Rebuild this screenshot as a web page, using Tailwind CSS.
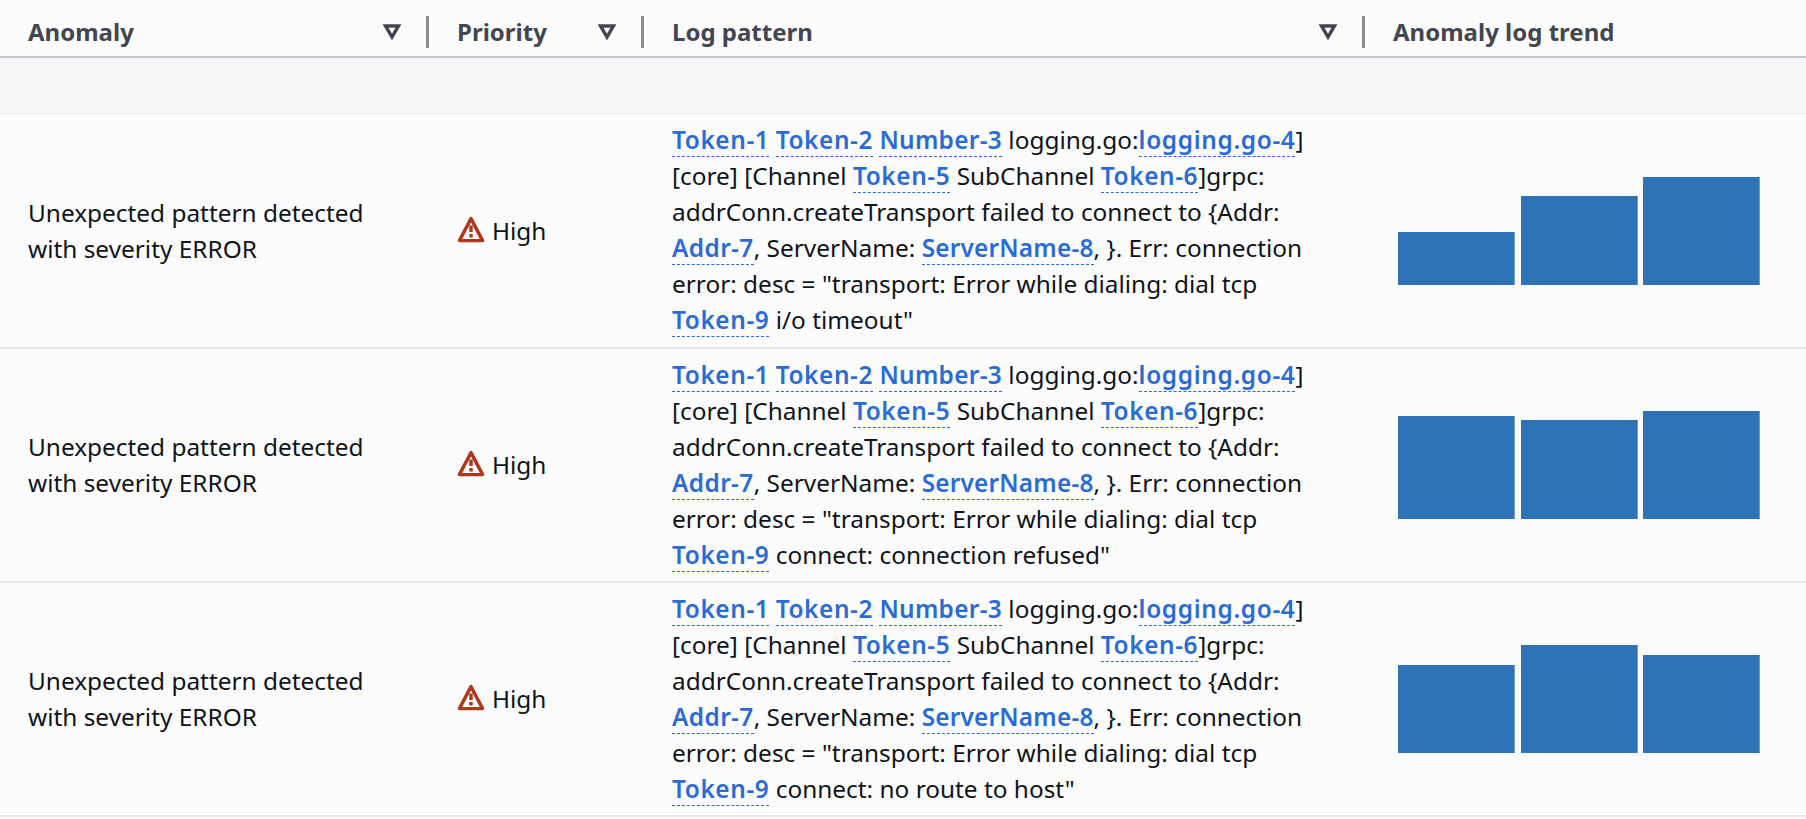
<!doctype html>
<html>
<head>
<meta charset="utf-8">
<script src="https://cdn.jsdelivr.net/npm/@tailwindcss/browser@4"></script>
</head>
<body class="bg-[#fcfcfc] overflow-hidden">
<div class="w-[1806px] h-[819px] bg-[#fcfcfc] font-['Noto_Sans',sans-serif] text-[24.4px] leading-[36px] text-[#0f141a]">
  <div class="grid grid-cols-[429px_215px_721px_1fr] h-[58px] pt-[8px] border-b-2 border-[#c6c6cd] text-[#424650] text-[24px] font-bold">
    <div class="flex items-center pl-[28px]">
      <span class="flex-1">Anomaly</span>
      <svg class="w-[18px] h-[16px] mr-[25px]" viewBox="0 0 18 16" fill="none" stroke="#424650" stroke-width="3.4"><path d="M2.6 2h12.8L9 13z"/></svg>
      <span class="w-[3px] h-[32px] bg-[#8c8c94]"></span>
    </div>
    <div class="flex items-center pl-[28px]">
      <span class="flex-1">Priority</span>
      <svg class="w-[18px] h-[16px] mr-[25px]" viewBox="0 0 18 16" fill="none" stroke="#424650" stroke-width="3.4"><path d="M2.6 2h12.8L9 13z"/></svg>
      <span class="w-[3px] h-[32px] bg-[#8c8c94]"></span>
    </div>
    <div class="flex items-center pl-[28px]">
      <span class="flex-1">Log pattern</span>
      <svg class="w-[18px] h-[16px] mr-[25px]" viewBox="0 0 18 16" fill="none" stroke="#424650" stroke-width="3.4"><path d="M2.6 2h12.8L9 13z"/></svg>
      <span class="w-[3px] h-[32px] bg-[#8c8c94]"></span>
    </div>
    <div class="flex items-center pl-[28px]">Anomaly log trend</div>
  </div>
  <div class="h-[56px] bg-[#f6f6f9] border-b border-[#e9ebed]"></div>

  <div class="grid grid-cols-[429px_215px_721px_1fr] h-[235px] border-b-2 border-[#e9ebed]">
    <div class="flex items-center pl-[28px] whitespace-nowrap"><span>Unexpected pattern detected<br>with severity ERROR</span></div>
    <div class="flex items-center pl-[28px] gap-[7px]">
      <svg class="w-[28px] h-[28px] mb-[2px]" viewBox="0 0 28 28" fill="none" stroke="#b0371a" stroke-width="3.4" stroke-linejoin="round"><path d="M14 2.6 2.4 24.6h23.2z"/><path d="M14 9.5v6.5M14 18v3.4"/></svg>
      <span>High</span>
    </div>
    <div class="pl-[28px] pt-[8px] whitespace-nowrap">
      <a class="tracking-[0.6px] text-[#2a6bd6] font-semibold border-b border-dashed border-[#2a6bd6]">Token-1</a> <a class="tracking-[0.6px] text-[#2a6bd6] font-semibold border-b border-dashed border-[#2a6bd6]">Token-2</a> <a class="tracking-[0.3px] text-[#2a6bd6] font-semibold border-b border-dashed border-[#2a6bd6]">Number-3</a> logging.go:<a class="tracking-[0.65px] text-[#2a6bd6] font-semibold border-b border-dashed border-[#2a6bd6]">logging.go-4</a>]<br>
      [core] [Channel <a class="tracking-[0.6px] text-[#2a6bd6] font-semibold border-b border-dashed border-[#2a6bd6]">Token-5</a> SubChannel <a class="tracking-[0.6px] text-[#2a6bd6] font-semibold border-b border-dashed border-[#2a6bd6]">Token-6</a>]grpc:<br>
      addrConn.createTransport failed to connect to {Addr:<br>
      <a class="tracking-[0.4px] text-[#2a6bd6] font-semibold border-b border-dashed border-[#2a6bd6]">Addr-7</a>, ServerName: <a class="tracking-[0.2px] text-[#2a6bd6] font-semibold border-b border-dashed border-[#2a6bd6]">ServerName-8</a>, }. Err: connection<br>
      error: desc = "transport: Error while dialing: dial tcp<br>
      <a class="tracking-[0.6px] text-[#2a6bd6] font-semibold border-b border-dashed border-[#2a6bd6]">Token-9</a> i/o timeout"
    </div>
    <div class="flex items-center pl-[33px]">
      <div class="flex items-end gap-[5.5px] h-[108px]">
        <div class="w-[117px] h-[53px] bg-[#2e73b8] border-r border-[#6f9fd0]"></div>
        <div class="w-[117px] h-[89px] bg-[#2e73b8] border-r border-[#6f9fd0]"></div>
        <div class="w-[117px] h-[108px] bg-[#2e73b8] border-r border-[#6f9fd0]"></div>
      </div>
    </div>
  </div>

  <div class="grid grid-cols-[429px_215px_721px_1fr] h-[234px] border-b-2 border-[#e9ebed]">
    <div class="flex items-center pl-[28px] whitespace-nowrap"><span>Unexpected pattern detected<br>with severity ERROR</span></div>
    <div class="flex items-center pl-[28px] gap-[7px]">
      <svg class="w-[28px] h-[28px] mb-[2px]" viewBox="0 0 28 28" fill="none" stroke="#b0371a" stroke-width="3.4" stroke-linejoin="round"><path d="M14 2.6 2.4 24.6h23.2z"/><path d="M14 9.5v6.5M14 18v3.4"/></svg>
      <span>High</span>
    </div>
    <div class="pl-[28px] pt-[8px] whitespace-nowrap">
      <a class="tracking-[0.6px] text-[#2a6bd6] font-semibold border-b border-dashed border-[#2a6bd6]">Token-1</a> <a class="tracking-[0.6px] text-[#2a6bd6] font-semibold border-b border-dashed border-[#2a6bd6]">Token-2</a> <a class="tracking-[0.3px] text-[#2a6bd6] font-semibold border-b border-dashed border-[#2a6bd6]">Number-3</a> logging.go:<a class="tracking-[0.65px] text-[#2a6bd6] font-semibold border-b border-dashed border-[#2a6bd6]">logging.go-4</a>]<br>
      [core] [Channel <a class="tracking-[0.6px] text-[#2a6bd6] font-semibold border-b border-dashed border-[#2a6bd6]">Token-5</a> SubChannel <a class="tracking-[0.6px] text-[#2a6bd6] font-semibold border-b border-dashed border-[#2a6bd6]">Token-6</a>]grpc:<br>
      addrConn.createTransport failed to connect to {Addr:<br>
      <a class="tracking-[0.4px] text-[#2a6bd6] font-semibold border-b border-dashed border-[#2a6bd6]">Addr-7</a>, ServerName: <a class="tracking-[0.2px] text-[#2a6bd6] font-semibold border-b border-dashed border-[#2a6bd6]">ServerName-8</a>, }. Err: connection<br>
      error: desc = "transport: Error while dialing: dial tcp<br>
      <a class="tracking-[0.6px] text-[#2a6bd6] font-semibold border-b border-dashed border-[#2a6bd6]">Token-9</a> connect: connection refused"
    </div>
    <div class="flex items-center pl-[33px]">
      <div class="flex items-end gap-[5.5px] h-[108px]">
        <div class="w-[117px] h-[103px] bg-[#2e73b8] border-r border-[#6f9fd0]"></div>
        <div class="w-[117px] h-[99px] bg-[#2e73b8] border-r border-[#6f9fd0]"></div>
        <div class="w-[117px] h-[108px] bg-[#2e73b8] border-r border-[#6f9fd0]"></div>
      </div>
    </div>
  </div>

  <div class="grid grid-cols-[429px_215px_721px_1fr] h-[234px] border-b-2 border-[#e9ebed]">
    <div class="flex items-center pl-[28px] whitespace-nowrap"><span>Unexpected pattern detected<br>with severity ERROR</span></div>
    <div class="flex items-center pl-[28px] gap-[7px]">
      <svg class="w-[28px] h-[28px] mb-[2px]" viewBox="0 0 28 28" fill="none" stroke="#b0371a" stroke-width="3.4" stroke-linejoin="round"><path d="M14 2.6 2.4 24.6h23.2z"/><path d="M14 9.5v6.5M14 18v3.4"/></svg>
      <span>High</span>
    </div>
    <div class="pl-[28px] pt-[8px] whitespace-nowrap">
      <a class="tracking-[0.6px] text-[#2a6bd6] font-semibold border-b border-dashed border-[#2a6bd6]">Token-1</a> <a class="tracking-[0.6px] text-[#2a6bd6] font-semibold border-b border-dashed border-[#2a6bd6]">Token-2</a> <a class="tracking-[0.3px] text-[#2a6bd6] font-semibold border-b border-dashed border-[#2a6bd6]">Number-3</a> logging.go:<a class="tracking-[0.65px] text-[#2a6bd6] font-semibold border-b border-dashed border-[#2a6bd6]">logging.go-4</a>]<br>
      [core] [Channel <a class="tracking-[0.6px] text-[#2a6bd6] font-semibold border-b border-dashed border-[#2a6bd6]">Token-5</a> SubChannel <a class="tracking-[0.6px] text-[#2a6bd6] font-semibold border-b border-dashed border-[#2a6bd6]">Token-6</a>]grpc:<br>
      addrConn.createTransport failed to connect to {Addr:<br>
      <a class="tracking-[0.4px] text-[#2a6bd6] font-semibold border-b border-dashed border-[#2a6bd6]">Addr-7</a>, ServerName: <a class="tracking-[0.2px] text-[#2a6bd6] font-semibold border-b border-dashed border-[#2a6bd6]">ServerName-8</a>, }. Err: connection<br>
      error: desc = "transport: Error while dialing: dial tcp<br>
      <a class="tracking-[0.6px] text-[#2a6bd6] font-semibold border-b border-dashed border-[#2a6bd6]">Token-9</a> connect: no route to host"
    </div>
    <div class="flex items-center pl-[33px]">
      <div class="flex items-end gap-[5.5px] h-[108px]">
        <div class="w-[117px] h-[88px] bg-[#2e73b8] border-r border-[#6f9fd0]"></div>
        <div class="w-[117px] h-[108px] bg-[#2e73b8] border-r border-[#6f9fd0]"></div>
        <div class="w-[117px] h-[98px] bg-[#2e73b8] border-r border-[#6f9fd0]"></div>
      </div>
    </div>
  </div>
</div>
</body>
</html>
